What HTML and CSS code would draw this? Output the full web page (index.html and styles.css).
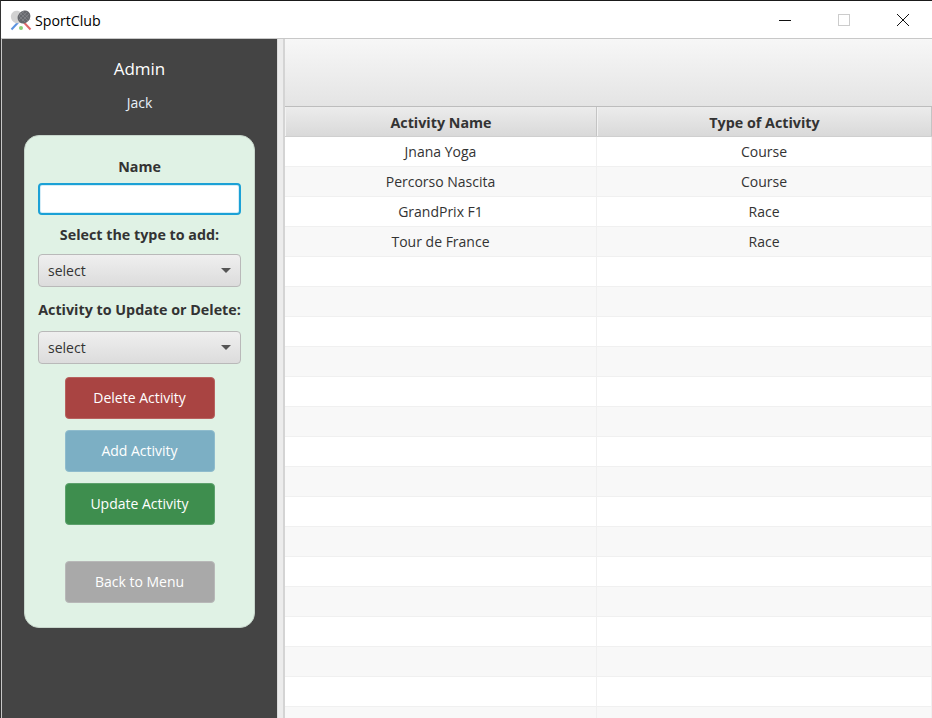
FILE: index.html
```html
<!DOCTYPE html>
<html lang="en">
<head>
  <meta charset="UTF-8">
  <meta name="viewport" content="width=device-width, initial-scale=1.0">
  <title>SportClub</title>
  <link rel="stylesheet" href="styles.css">
</head>
<body>
  <div class="window">
    <header class="titlebar">
      <svg class="app-icon" width="22" height="21" viewBox="0 0 22 21">
        <line x1="1.5" y1="19.5" x2="8" y2="12.5" stroke="#5b93e0" stroke-width="2"/>
        <line x1="20.5" y1="19.5" x2="14" y2="12.5" stroke="#e0686a" stroke-width="2"/>
        <ellipse cx="7" cy="7" rx="6" ry="6.5" fill="#d2d2d2" transform="rotate(-35 7 7)"/>
        <ellipse cx="14" cy="7" rx="6" ry="7" fill="#66686d" transform="rotate(40 14 7)"/>
        <path d="M10 3L18 11M12 1.5L20 9.5M9 6L15 12M17 2L9 10M20 3L12 11M14 1L9 6" stroke="#8d8f94" stroke-width="0.6" fill="none"/>
        <circle cx="11" cy="18" r="2" fill="#8ccf76"/>
      </svg>
      <span class="app-title">SportClub</span>
      <div class="win-controls">
        <svg width="12" height="12" viewBox="0 0 12 12"><line x1="0" y1="6.5" x2="12" y2="6.5" stroke="#111"/></svg>
        <svg width="12" height="12" viewBox="0 0 12 12"><rect x="0.5" y="0.5" width="11" height="11" fill="none" stroke="#ccc"/></svg>
        <svg width="12" height="12" viewBox="0 0 12 12"><path d="M0 0L12 12M12 0L0 12" stroke="#111" fill="none"/></svg>
      </div>
    </header>

    <div class="content">
      <aside class="sidebar">
        <div class="role">Admin</div>
        <div class="username">Jack</div>
        <form class="card">
          <label class="field-label first" for="name">Name</label>
          <input class="text-input" type="text" id="name">
          <div class="field-label">Select the type to add:</div>
          <div class="combo"><span>select</span><i class="arrow"></i></div>
          <div class="field-label">Activity to Update or Delete:</div>
          <div class="combo"><span>select</span><i class="arrow"></i></div>
          <div class="actions">
            <button type="button" class="btn btn-delete">Delete Activity</button>
            <button type="button" class="btn btn-add">Add Activity</button>
            <button type="button" class="btn btn-update">Update Activity</button>
            <button type="button" class="btn btn-back">Back to Menu</button>
          </div>
        </form>
      </aside>

      <div class="splitter"></div>

      <main class="main">
        <div class="toolbar"></div>
        <div class="table-head">
          <div class="th">Activity Name</div>
          <div class="th">Type of Activity</div>
        </div>
        <div class="table-body">
          <div class="row"><div>Jnana Yoga</div><div>Course</div></div>
          <div class="row"><div>Percorso Nascita</div><div>Course</div></div>
          <div class="row"><div>GrandPrix F1</div><div>Race</div></div>
          <div class="row"><div>Tour de France</div><div>Race</div></div>
          <div class="row"><div></div><div></div></div>
          <div class="row"><div></div><div></div></div>
          <div class="row"><div></div><div></div></div>
          <div class="row"><div></div><div></div></div>
          <div class="row"><div></div><div></div></div>
          <div class="row"><div></div><div></div></div>
          <div class="row"><div></div><div></div></div>
          <div class="row"><div></div><div></div></div>
          <div class="row"><div></div><div></div></div>
          <div class="row"><div></div><div></div></div>
          <div class="row"><div></div><div></div></div>
          <div class="row"><div></div><div></div></div>
          <div class="row"><div></div><div></div></div>
          <div class="row"><div></div><div></div></div>
          <div class="row"><div></div><div></div></div>
          <div class="row"><div></div><div></div></div>
        </div>
      </main>
    </div>
  </div>
</body>
</html>
```

FILE: styles.css
```css
* {
  box-sizing: border-box;
}
html, body {
  height: 100%;
  margin: 0;
  overflow: hidden;
}
body {
  font-family: "Open Sans", "Noto Sans", Arial, sans-serif;
  font-size: 14px;
  color: #333;
}
.window {
  height: 718px;
  display: flex;
  flex-direction: column;
  border-top: 1px solid #1a1a1a;
  border-left: 1px solid #333;
  background: #fff;
}
.titlebar {
  height: 37px;
  flex: none;
  display: flex;
  align-items: center;
  padding: 1px 0 0 9px;
  background: #fff;
}
.app-icon {
  flex: none;
}
.app-title {
  margin-left: 3px;
  font-size: 14.2px;
  color: #000;
}
.win-controls {
  margin-left: auto;
  display: flex;
  gap: 47px;
  padding-right: 23px;
}
.content {
  flex: 1;
  min-height: 0;
  display: flex;
  border-top: 1px solid #c8c8c8;
  border-left: 1px solid #c8c8c8;
}
.sidebar {
  width: 275px;
  flex: none;
  background: #444;
  padding: 0 22px;
  color: #fff;
  text-align: center;
}
.role {
  margin-top: 17px;
  font-size: 17px;
  line-height: 26px;
}
.username {
  margin-top: 11px;
  font-size: 14px;
  line-height: 20px;
  color: #e8f1fa;
}
.card {
  margin-top: 22px;
  height: 493px;
  padding: 0 13px;
  background: #e0f2e5;
  border: 1px solid #c7d6cb;
  border-radius: 15px;
  display: flex;
  flex-direction: column;
  color: #333;
}
.field-label {
  display: block;
  font-size: 14.3px;
  font-weight: 700;
  line-height: 20px;
  margin: 10px 0 9px;
  white-space: nowrap;
}
.field-label.first {
  margin: 21px 0 6px;
}
.combo + .field-label {
  margin: 13px 0 11px;
}
.text-input {
  height: 32px;
  width: 100%;
  background: #fff;
  border: 2px solid #1ba1d6;
  border-radius: 4px;
  box-shadow: inset 0 0 0 1px #d5edf7;
  outline: none;
}
.combo {
  height: 33px;
  display: flex;
  align-items: center;
  justify-content: space-between;
  padding: 0 9px;
  border: 1px solid #b9b9b9;
  border-radius: 4px;
  background: linear-gradient(#efefef, #dcdcdc);
  font-size: 14px;
}
.arrow {
  width: 0;
  height: 0;
  border-left: 5px solid transparent;
  border-right: 5px solid transparent;
  border-top: 5px solid #555;
}
.actions {
  margin-top: 13px;
  display: flex;
  flex-direction: column;
  align-items: center;
  gap: 11px;
}
.btn {
  width: 150px;
  height: 42px;
  border: 1px solid transparent;
  border-radius: 4px;
  color: #fff;
  font-family: inherit;
  font-size: 14px;
  padding: 0 0 2px;
}
.btn-delete {
  background: #a94442;
  border-color: #b8625f;
}
.btn-add {
  background: #7cafc4;
  border-color: #8fbccd;
}
.btn-update {
  background: #3e8e4e;
  border-color: #5da16d;
}
.btn-back {
  background: #a9a9a9;
  border-color: #b8b8b8;
  margin-top: 25px;
}
.splitter {
  width: 8px;
  flex: none;
  background: #ececec;
  border-left: 1px solid #dcdcdc;
  border-right: 2px solid #d4d4d4;
}
.main {
  flex: 1;
  min-width: 0;
  display: flex;
  flex-direction: column;
}
.toolbar {
  height: 68px;
  flex: none;
  background: linear-gradient(#f7f7f7, #e4e4e4);
  border-bottom: 1px solid #bdbdbd;
}
.table-head {
  height: 30px;
  flex: none;
  display: grid;
  grid-template-columns: 312px 1fr;
  border-bottom: 1px solid #cfcfcf;
}
.th {
  display: flex;
  align-items: center;
  justify-content: center;
  padding-top: 1px;
  font-size: 14.3px;
  font-weight: 700;
  background: linear-gradient(#ececec, #d9d9d9);
  border-right: 1px solid #c4c4c4;
  border-left: 1px solid #f2f2f2;
}
.row {
  height: 30px;
  display: grid;
  grid-template-columns: 312px 1fr;
  background: #fff;
  border-bottom: 1px solid #f0f0f0;
}
.row:nth-child(even) {
  background: #f8f8f8;
}
.row > div {
  display: flex;
  align-items: center;
  justify-content: center;
  border-right: 1px solid #f0f0f0;
}
```
